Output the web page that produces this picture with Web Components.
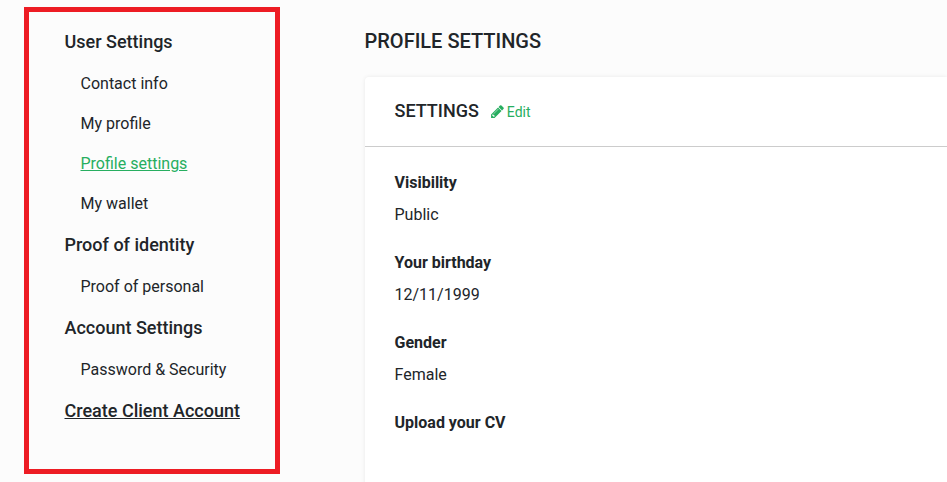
<!DOCTYPE html>
<html>
<head>
<meta charset="utf-8">
<title>Profile settings</title>
<style>
html, body { margin: 0; height: 100%; overflow: hidden; }
body { background: #fcfcfc; font-family: Roboto, "Liberation Sans", sans-serif; color: #212529; }
</style>
</head>
<body>
<settings-page>
  <side-nav slot="nav">
    <nav-group>User Settings</nav-group>
    <nav-item>Contact info</nav-item>
    <nav-item>My profile</nav-item>
    <nav-item active>Profile settings</nav-item>
    <nav-item>My wallet</nav-item>
    <nav-group>Proof of identity</nav-group>
    <nav-item>Proof of personal</nav-item>
    <nav-group>Account Settings</nav-group>
    <nav-item>Password &amp; Security</nav-item>
    <nav-group link>Create Client Account</nav-group>
  </side-nav>
  <settings-card heading="SETTINGS">
    <setting-field label="Visibility">Public</setting-field>
    <setting-field label="Your birthday">12/11/1999</setting-field>
    <setting-field label="Gender">Female</setting-field>
    <setting-field label="Upload your CV"></setting-field>
  </settings-card>
</settings-page>

<template id="page-tpl">
  <style>
    :host { display: flex; align-items: flex-start; height: 482px; overflow: hidden; padding: 7px 0 0 24px; box-sizing: border-box; }
    main { margin-left: 85px; flex: 1; min-width: 0; }
    h1 { margin: 0 0 0 -.5px; padding-top: 21px; font-size: 20px; line-height: 26px; font-weight: 500; color: #212529; }
    .cards { margin-top: 23px; }
  </style>
  <slot name="nav"></slot>
  <main>
    <h1>PROFILE SETTINGS</h1>
    <div class="cards"><slot></slot></div>
  </main>
</template>

<template id="nav-tpl">
  <style>
    :host { display: block; width: 256px; height: 467px; box-sizing: border-box; border: 5px solid #ed1c24; padding: 16px 0 0 35.5px; flex: none; }
  </style>
  <slot></slot>
</template>

<template id="group-tpl">
  <style>
    :host { display: block; height: 43px; padding-top: 1px; font-size: 18px; font-weight: 500; line-height: 26px; color: #212529; box-sizing: border-box; }
    :host([link]) { text-decoration: underline; }
  </style>
  <slot></slot>
</template>

<template id="item-tpl">
  <style>
    :host { display: block; height: 40px; padding-left: 16px; font-size: 16px; line-height: 26px; color: #212529; box-sizing: border-box; }
    :host([active]) { color: #27ae60; text-decoration: underline; }
  </style>
  <slot></slot>
</template>

<template id="card-tpl">
  <style>
    :host { display: block; background: #fff; border-radius: 4px 0 0 4px; box-shadow: 0 0 4px rgba(0,0,0,.08); height: 420px; }
    header { display: flex; align-items: center; height: 69px; padding: 0 30px 0 29.5px; border-bottom: 1px solid #ccc; }
    h2 { margin: 0; font-size: 18px; font-weight: 500; line-height: 24px; color: #212529; position: relative; top: -1px; }
    a { display: flex; align-items: center; gap: 2px; margin-left: 11px; color: #27ae60; font-size: 14px; text-decoration: none; }
    svg { width: 15px; height: 15px; fill: currentColor; }
    .body { padding: 23px 30px 0 29.5px; }
  </style>
  <header>
    <h2></h2>
    <a><svg viewBox="0 0 1792 1792"><path d="M491 1536l91-91-235-235-91 91v107h128v128h107zm523-928q0-22-22-22-10 0-17 7l-542 542q-7 7-7 17 0 22 22 22 10 0 17-7l542-542q7-7 7-17zm-54-192l416 416-832 832h-416v-416zm683 96q0 53-37 90l-166 166-416-416 166-165q36-38 90-38 53 0 91 38l235 234q37 39 37 91z"/></svg>Edit</a>
  </header>
  <div class="body"><slot></slot></div>
</template>

<template id="field-tpl">
  <style>
    :host { display: block; height: 80px; font-size: 16px; color: #212529; }
    b { display: block; font-weight: 700; line-height: 26px; }
    div { margin-top: 6px; line-height: 26px; }
  </style>
  <b></b>
  <div><slot></slot></div>
</template>

<script>
function stamp(el, id) {
  const root = el.attachShadow({ mode: 'open' });
  root.appendChild(document.getElementById(id).content.cloneNode(true));
  return root;
}

customElements.define('settings-page', class extends HTMLElement {
  constructor() { super(); stamp(this, 'page-tpl'); }
});
customElements.define('side-nav', class extends HTMLElement {
  constructor() { super(); stamp(this, 'nav-tpl'); }
});
customElements.define('nav-group', class extends HTMLElement {
  constructor() { super(); stamp(this, 'group-tpl'); }
});
customElements.define('nav-item', class extends HTMLElement {
  constructor() { super(); stamp(this, 'item-tpl'); }
});
customElements.define('settings-card', class extends HTMLElement {
  constructor() { super(); stamp(this, 'card-tpl'); }
  connectedCallback() {
    this.shadowRoot.querySelector('h2').textContent = this.getAttribute('heading');
  }
});
customElements.define('setting-field', class extends HTMLElement {
  constructor() { super(); stamp(this, 'field-tpl'); }
  connectedCallback() {
    this.shadowRoot.querySelector('b').textContent = this.getAttribute('label');
  }
});
</script>
</body>
</html>
